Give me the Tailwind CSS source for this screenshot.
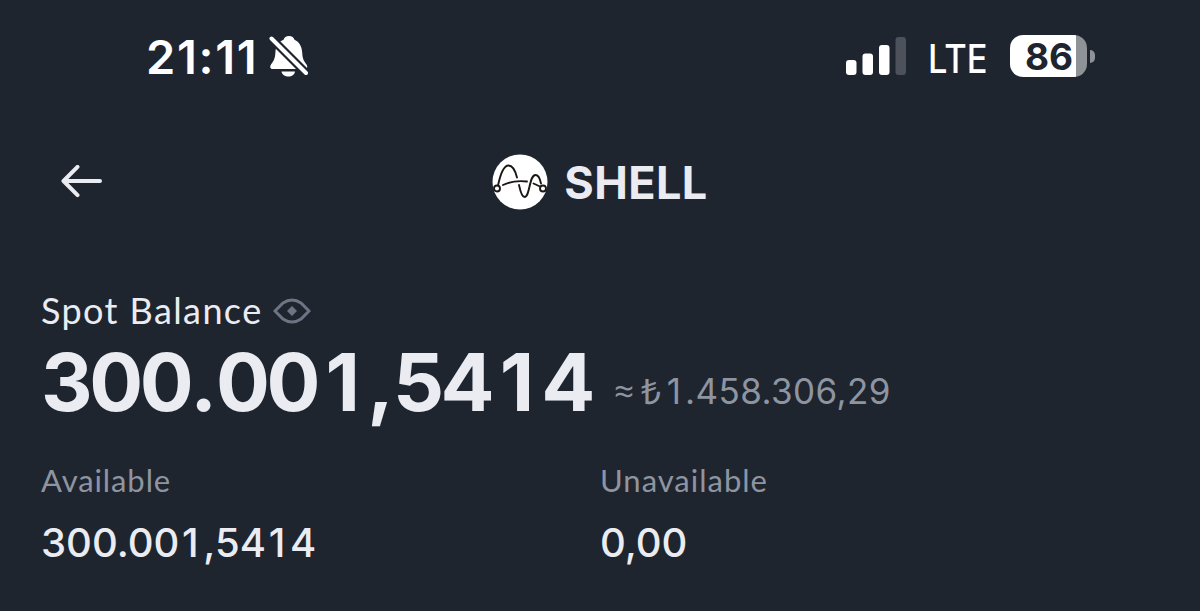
<!DOCTYPE html>
<html lang="en">

<head>
    <meta charset="UTF-8">
    <meta name="viewport" content="width=device-width, initial-scale=1.0">
    <script src="https://cdn.jsdelivr.net/npm/@tailwindcss/browser@4"></script>
    <title>SHELL | Spot Balance</title>
</head>

<body class="bg-[#1e252f] text-[#eaecf2] h-[611px] overflow-hidden font-['Inter',sans-serif] whitespace-nowrap">
    <!-- Status bar -->
    <div class="h-28 pl-[146px] pr-[105px] flex items-center justify-between text-white">
        <div class="flex items-center">
            <span class="w-[123px] text-[47px] leading-[50px] font-semibold tracking-[1.7px] pt-[2px]">21:11</span>
            <svg class="w-10 h-[44px]" viewBox="0 0 40 44" fill="none">
                <path d="M20 2c-3 0-4.800 1.600-5.500 3.800C9 8 6.800 12.500 6.400 18.500 6 25 4.500 27 2 30.500c-1.500 2.500-.8 4.500 2 4.500h31.500c2.600 0 3.600-2 2-4.500-2.500-3.500-4-5.500-4.300-12-.4-6-2.700-10.500-7.700-12.700C24.800 3.600 23 2 20 2z" fill="#fff" />
                <path d="M12.500 37.500h13.500c-.6 3.500-3.200 5-6.600 5s-6.300-1.500-6.900-5z" fill="#fff" />
                <path d="M2.500 4.500L37 39" stroke="#1e252f" stroke-width="8.500" />
                <path d="M2.500 4.500L37 39" stroke="#fff" stroke-width="4" stroke-linecap="round" />
            </svg>
        </div>
        <div class="flex items-center">
            <svg class="w-[60px] h-[38px] mr-[22px]" viewBox="0 0 60 38">
                <rect x="0" y="23" width="10.500" height="15" rx="3" fill="#fff" />
                <rect x="16.500" y="16.500" width="10.500" height="21.500" rx="3" fill="#fff" />
                <rect x="33" y="8" width="10.500" height="30" rx="3" fill="#fff" />
                <rect x="49.500" y="0" width="10.500" height="38" rx="3" fill="#4c515a" />
            </svg>
            <div class="w-[82px] pt-[5px]">
                <span class="inline-block origin-left scale-x-[0.86] text-[40px] leading-[44px] font-medium">LTE</span>
            </div>
            <div class="flex items-center">
                <div class="w-[77px] h-[42px] rounded-[13px] bg-linear-to-r from-white from-[66px] to-[#8f9297] to-[66px] text-[#1e252f] text-[37px] leading-[43px] font-bold pl-[15px]">86</div>
                <div class="w-[5px] h-[13px] ml-[3px] rounded-r-full bg-[#8f9297]"></div>
            </div>
        </div>
    </div>

    <!-- Header -->
    <header class="h-[140px] px-[60px] flex items-center justify-between">
        <svg class="w-[44px] h-[34px]" viewBox="0 0 44 34" fill="none" stroke="#eaecf2" stroke-width="4" stroke-linecap="round" stroke-linejoin="round">
            <path d="M40 16H3.500M17.500 1.800L3.500 16l14 14.200" />
        </svg>
        <div class="flex items-center">
            <svg class="w-14 h-14 mr-4" viewBox="0 0 56 56" fill="none" stroke="#1b1716" stroke-width="1.900" stroke-linecap="round">
                <circle cx="28" cy="28" r="27.500" fill="#fff" stroke="none" />
                <path d="M6 31.500C8 22 11 11.500 16.500 11.500c4.500 0 7 6 8.500 12" />
                <path d="M11 31c7-3.500 15-4.500 24-3.500" />
                <path d="M27 31c1.500 7 3 12 5.500 12 5.500 0 4.500-22 11-22 3 0 4.500 3.500 5.500 8.500" />
                <path d="M41.500 29.500l6.500 3" />
                <circle cx="5" cy="34.500" r="3" fill="#fff" />
                <circle cx="51" cy="34.500" r="3" fill="#fff" />
            </svg>
            <h1 class="text-[45px] leading-[60px] font-bold tracking-[0.4px] pt-[1px]">SHELL</h1>
        </div>
        <div class="w-[44px]"></div>
    </header>

    <!-- Balance -->
    <main class="px-[41px] pt-[36px]">
        <div class="flex items-center h-[43px]">
            <h2 class="w-[232px] font-['Lato',sans-serif] text-[36px] leading-[44px] tracking-[1.4px]">Spot Balance</h2>
            <svg class="w-[38px] h-[26px] mt-[2px]" viewBox="0 0 38 26" fill="none">
                <path d="M2 13L10 5Q14.500 2 19 2t9 3l8 8-8 8q-4.500 3-9 3t-9-3z" stroke="#6d7584" stroke-width="3" />
                <path d="M19 8l5 5-5 5-5-5z" fill="#6d7584" />
            </svg>
        </div>
        <!-- the 1s sit in cells as wide as the other digits -->
        <div class="flex h-24">
            <span class="w-[573px] text-[80px] leading-[102px] font-bold tracking-[-3.4px]">300<span class="tracking-[-1px]">.</span>00<span class="inline-block w-[50px] pr-[2px] text-center">1</span><span class="tracking-[-1px]">,</span>54<span class="inline-block w-[50px] pr-[2px] text-center">1</span>4</span>
            <div class="flex pt-[38px] text-[35px] leading-[44px] text-[#8e95a1]">
                <span class="w-[27px] text-[35px] font-['Open_Sans',sans-serif]">≈</span>
                <span class="w-[22px] font-['Open_Sans',sans-serif]">₺</span>
                <span class="tracking-[0.4px]"><span class="inline-block w-[22px] text-center">1</span>.458.306,29</span>
            </div>
        </div>

        <div class="grid grid-cols-2 pt-[32px]">
            <div>
                <p class="font-['Lato',sans-serif] text-[31px] leading-[42px] text-[#8e95a1] tracking-[0.9px]">Available</p>
                <p class="mt-[13px] text-[40px] leading-[58px] font-medium">300.00<span class="inline-block w-[24px] pr-[2px] text-center">1</span>,54<span class="inline-block w-[24px] pr-[2px] text-center">1</span>4</p>
            </div>
            <div>
                <p class="font-['Lato',sans-serif] text-[31px] leading-[42px] text-[#8e95a1] tracking-[1px]">Unavailable</p>
                <p class="mt-[13px] text-[40px] leading-[58px] font-medium">0,00</p>
            </div>
        </div>
    </main>
</body>

</html>
